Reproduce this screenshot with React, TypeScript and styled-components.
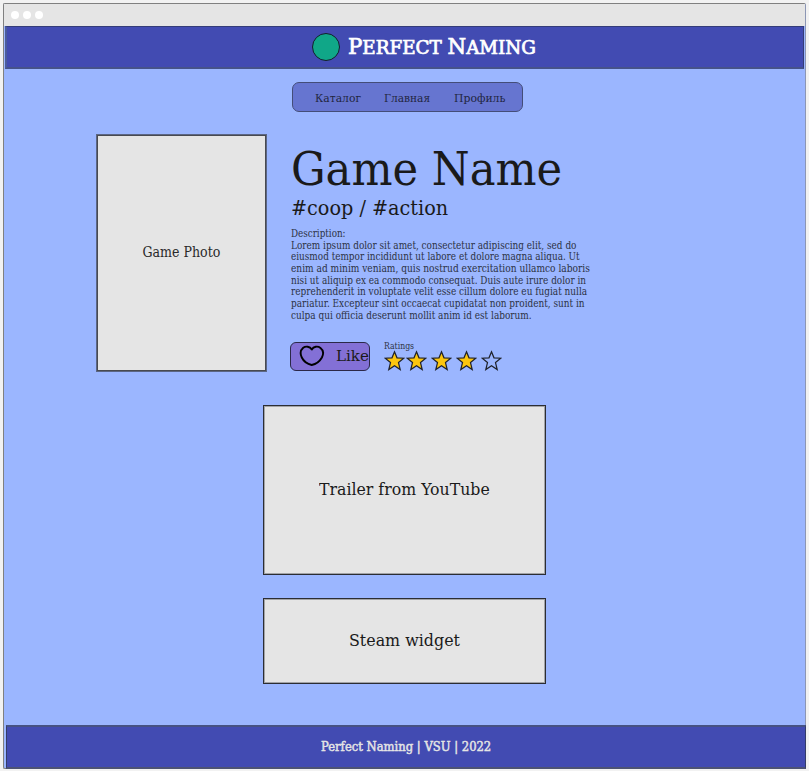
import React, { useLayoutEffect, useRef, useState } from "react";
import styled, { createGlobalStyle } from "styled-components";

const GlobalStyle = createGlobalStyle`
  * { box-sizing: border-box; }
  body {
    margin: 0;
    background: #f2f2f2;
    color: #1a1a1a;
    font-family: "Roboto Slab", "DejaVu Serif Condensed", "DejaVu Serif", serif;
    overflow: hidden;
  }
`;

const Page = styled.div`
  height: 771px;
  padding: 3px;
`;

const Window = styled.div`
  display: flex;
  flex-direction: column;
  width: 803px;
  height: 766px;
  border: 1px solid #808080;
  border-right-color: #8c96b4;
  border-radius: 2px;
  background: #9bb6ff;
`;

const TitleBar = styled.div`
  display: flex;
  flex: none;
  align-items: center;
  gap: 4px;
  height: 22px;
  padding-left: 7px;
  background: #e5e5e5;
`;

const Dot = styled.span`
  width: 8px;
  height: 8px;
  border-radius: 50%;
  background: #fff;
`;

const Header = styled.header`
  display: flex;
  flex: none;
  height: 43px;
  margin: 0 1px 0 1px;
  padding: 6px 0 0 305px;
  border: 1px solid #343c78;
  border-width: 1px 1px 2px 2px;
  border-left-color: #4c5c9c;
  border-bottom-color: #46538a;
  background: #424bb2;
  gap: 8px;
`;

const Logo = styled.span`
  width: 28px;
  height: 28px;
  border: 1px solid #141d2b;
  border-radius: 50%;
  background: #10a788;
`;

const Capital = styled.span`
  font-size: 21.5px;
`;

const Nav = styled.nav`
  display: flex;
  flex: none;
  width: 231px;
  height: 30px;
  margin: 13px 0 0 288px;
  padding-left: 22px;
  gap: 23px;
  border: 1px solid #444d78;
  border-radius: 7px;
  background: #6675d0;
`;

const Game = styled.section`
  display: flex;
  flex: none;
  height: 238px;
  margin: 22px 0 0 92px;
  gap: 24px;
`;

const Frame = styled.div<{ $w: number; $h: number; $soft?: boolean }>`
  display: flex;
  flex: none;
  justify-content: center;
  align-items: center;
  width: ${(p) => p.$w}px;
  height: ${(p) => p.$h}px;
  padding-bottom: ${(p) => (p.$soft ? 2 : 0)}px;
  border: 1px solid ${(p) => (p.$soft ? "#5b6684" : "#2b2d33")};
  box-shadow: inset 0 0 0 1px ${(p) => (p.$soft ? "#484a50" : "#a2a3a6")};
  background: #e5e5e5;
`;

const Info = styled.div`
  display: flex;
  flex-direction: column;
  padding-top: 10px;
`;

const Description = styled.div`
  display: flex;
  flex-direction: column;
  margin-top: 6px;
`;

const Actions = styled.div`
  display: flex;
  height: 32px;
  margin: 19px 0 0 -1px;
  gap: 14px;
`;

const Ratings = styled.div`
  padding-top: 1px;
`;

const LikeButton = styled.button`
  display: flex;
  width: 80px;
  height: 29px;
  margin-top: 1px;
  padding: 0 0 0 8px;
  gap: 10px;
  border: 1.5px solid #2b2848;
  border-radius: 6px;
  background: #8370d6;
  color: inherit;
  font: inherit;
`;

const Heart = styled.svg`
  flex: none;
  width: 26px;
  height: 26px;
`;

const Stars = styled.div`
  display: flex;
  margin: -0.5px 0 0 -0.5px;
`;

const StarIcon = styled.svg<{ $gap: number }>`
  width: 21px;
  height: 21px;
  margin-right: ${(p) => p.$gap}px;
`;

const Media = styled.section`
  display: flex;
  flex: none;
  flex-direction: column;
  gap: 23px;
  margin: 33px 0 0 259px;
`;

const Footer = styled.footer`
  display: flex;
  flex: none;
  justify-content: center;
  height: 44px;
  margin: auto -1px -1px 2px;
  border: 1px solid #343c68;
  border-top: 2px solid #465284;
  border-bottom: 2px solid #4d5374;
  background: #424bb2;
  color: #e5e5e5;
`;

const LineBox = styled.span<{ $w: number; $h: number }>`
  display: block;
  flex: none;
  width: ${(p) => p.$w}px;
  height: ${(p) => p.$h}px;
`;

const LineText = styled.span<{ $h: number; $size: number; $stroke?: number; $color?: string }>`
  display: inline-block;
  transform-origin: 0 50%;
  white-space: pre;
  font-size: ${(p) => p.$size}px;
  line-height: ${(p) => p.$h}px;
  color: ${(p) => p.$color ?? "inherit"};
  -webkit-text-stroke: ${(p) => p.$stroke ?? 0}px currentColor;
  vertical-align: top;
`;

type LineProps = {
  w: number;
  h: number;
  size: number;
  stroke?: number;
  color?: string;
  children: React.ReactNode;
};

/* One line of text, condensed or widened so that it fills its measure. */
function Line({ w, h, size, stroke, color, children }: LineProps) {
  const ref = useRef<HTMLSpanElement>(null);
  const [scale, setScale] = useState(1);
  useLayoutEffect(() => {
    if (ref.current) setScale(w / ref.current.offsetWidth);
  }, [w]);
  return (
    <LineBox $w={w} $h={h}>
      <LineText ref={ref} $h={h} $size={size} $stroke={stroke} $color={color} style={{ transform: `scaleX(${scale})` }}>
        {children}
      </LineText>
    </LineBox>
  );
}

function Star({ filled, gap }: { filled: boolean; gap: number }) {
  return (
    <StarIcon $gap={gap} viewBox="0 0 21 21">
      <path
        d="M10.5 1.8 13 7.8 19.8 8.2 14.5 12.6 16.2 19.6 10.5 15.8 4.8 19.6 6.5 12.6 1.2 8.2 8 7.8Z"
        fill={filled ? "#fcc60e" : "none"}
        stroke="#1f222b"
        strokeWidth="1.25"
      />
    </StarIcon>
  );
}

const description: [string, number][] = [
  ["Description:", 55],
  ["Lorem ipsum dolor sit amet, consectetur adipiscing elit, sed do", 285.5],
  ["eiusmod tempor incididunt ut labore et dolore magna aliqua. Ut", 288.5],
  ["enim ad minim veniam, quis nostrud exercitation ullamco laboris", 299],
  ["nisi ut aliquip ex ea commodo consequat. Duis aute irure dolor in", 295.5],
  ["reprehenderit in voluptate velit esse cillum dolore eu fugiat nulla", 296],
  ["pariatur. Excepteur sint occaecat cupidatat non proident, sunt in", 293.5],
  ["culpa qui officia deserunt mollit anim id est laborum.", 241],
];

const stars = [
  { filled: true, gap: 1 },
  { filled: true, gap: 4 },
  { filled: true, gap: 4 },
  { filled: true, gap: 4 },
  { filled: false, gap: 0 },
];

export default function App() {
  return (
    <>
      <GlobalStyle />
      <Page>
        <Window>
          <TitleBar>
            <Dot />
            <Dot />
            <Dot />
          </TitleBar>
          <Header>
            <Logo />
            <Line w={188} h={27} size={18.5} stroke={0.7} color="#fff">
              <Capital>P</Capital>ERFECT <Capital>N</Capital>AMING
            </Line>
          </Header>
          <Nav>
            <Line w={46} h={30} size={10.4} color="#22253f">Каталог</Line>
            <Line w={46.5} h={30} size={10.4} color="#22253f">Главная</Line>
            <Line w={51} h={30} size={10.4} color="#22253f">Профиль</Line>
          </Nav>
          <Game>
            <Frame $w={171} $h={238} $soft>
              <Line w={78} h={22} size={14} color="#2a2a2a">Game Photo</Line>
            </Frame>
            <Info>
              <Line w={271} h={50} size={46}>Game Name</Line>
              <Line w={157} h={28} size={20}>#coop / #action</Line>
              <Description>
                {description.map(([text, width]) => (
                  <Line key={text} w={width} h={11.7} size={10.3} color="#2c3244">
                    {text}
                  </Line>
                ))}
              </Description>
              <Actions>
                <LikeButton>
                  <Heart viewBox="0 0 26 26">
                    <path
                      d="M12.8 6.5C10.8 3.4 6.8 2.8 4.2 4.8 1.4 7.2 1.1 11 2.8 14.5 4.8 18.6 9.2 21.2 12.7 22 16.6 21.2 20.6 18.6 22.9 14.5 24.7 10.8 24.3 7 21.5 4.9 18.7 2.8 14.5 3.4 12.8 6.5Z"
                      fill="none"
                      stroke="#000"
                      strokeWidth="1.9"
                      strokeLinejoin="round"
                    />
                  </Heart>
                  <Line w={32.5} h={26} size={15.5}>Like</Line>
                </LikeButton>
                <Ratings>
                  <Line w={30} h={9} size={8.3} color="#2c3244">Ratings</Line>
                  <Stars>
                    {stars.map((s, i) => (
                      <Star key={i} {...s} />
                    ))}
                  </Stars>
                </Ratings>
              </Actions>
            </Info>
          </Game>
          <Media>
            <Frame $w={283} $h={170}>
              <Line w={171} h={24} size={16.3}>Trailer from YouTube</Line>
            </Frame>
            <Frame $w={283} $h={86}>
              <Line w={110.5} h={24} size={16.3}>Steam widget</Line>
            </Frame>
          </Media>
          <Footer>
            <Line w={170.5} h={40} size={12.7} stroke={0.45}>Perfect Naming | VSU | 2022</Line>
          </Footer>
        </Window>
      </Page>
    </>
  );
}
